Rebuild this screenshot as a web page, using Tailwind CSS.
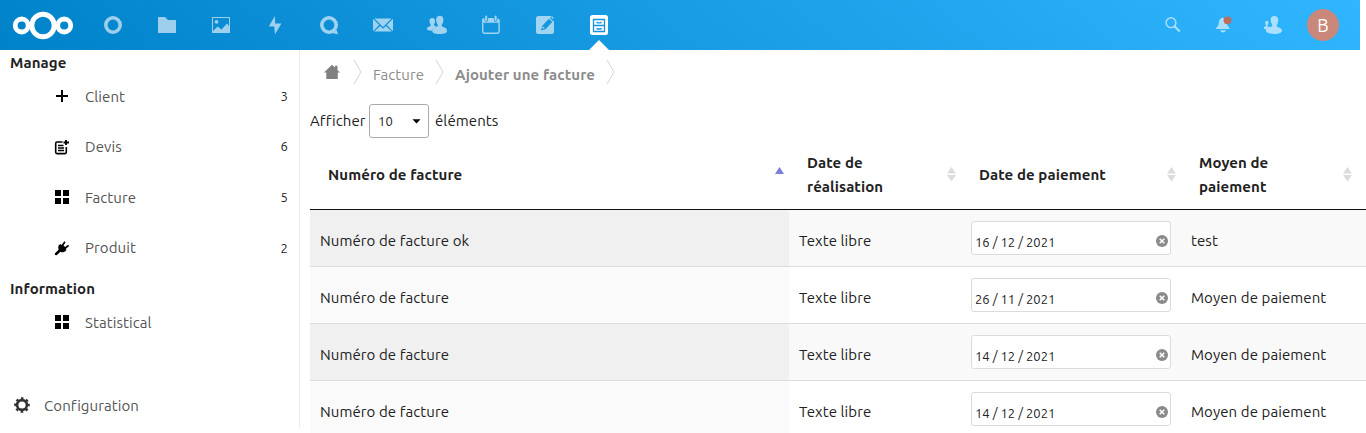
<!DOCTYPE html>
<html lang="fr">
<head>
<meta charset="utf-8">
<title>Facture</title>
<script src="https://cdn.jsdelivr.net/npm/@tailwindcss/browser@4"></script>
</head>
<body class="h-[433px] w-[1366px] overflow-hidden bg-white font-['Ubuntu','Noto_Sans',sans-serif] text-[15px] tracking-[0.085px] text-[#222]">
<header class="flex h-[50px] w-[1360px] items-center bg-[linear-gradient(40deg,#0082c9_0%,#30b6ff_100%)]">
  <svg class="h-[50px] w-[86px] shrink-0" viewBox="0 0 86 50" fill="none" stroke="#fff"><circle cx="21.7" cy="25.5" r="6.5" stroke-width="4.8"/><circle cx="43" cy="25.5" r="11.2" stroke-width="5"/><circle cx="64.2" cy="25.5" r="6.5" stroke-width="4.8"/></svg>
  <nav class="flex h-[50px] text-white">
    <svg class="h-[50px] w-[54px] opacity-60" viewBox="0 0 54 50" fill="none" stroke="currentColor"><circle cx="27" cy="25" r="7.2" stroke-width="3.6"/></svg>
    <svg class="h-[50px] w-[54px] opacity-60" viewBox="0 0 54 50" fill="currentColor"><path d="M18 17.5q0-.5.5-.5H25l3 3h7.500q.5 0 .5.500V32.500q0 .5-.5.500H18.500q-.5 0-.5-.5z"/></svg>
    <svg class="h-[50px] w-[54px] opacity-60" viewBox="0 0 54 50" fill="currentColor"><path fill-rule="evenodd" d="M18.500 17h17q.5 0 .5.500v15q0 .5-.5.500h-17q-.5 0-.5-.5v-15q0-.5.500-.5zM19 18v13l4.500-4.500 4 3 5.500-6 2 2.500V18z"/><circle cx="22.500" cy="21.800" r="1.900"/></svg>
    <svg class="h-[50px] w-[54px] opacity-60" viewBox="0 0 54 50" fill="currentColor"><path d="M26.800 16 20.800 26.500h5.400L27 34.200l6.400-10.700h-6.200z"/></svg>
    <svg class="h-[50px] w-[54px] opacity-60" viewBox="0 0 54 50" fill="none" stroke="currentColor"><circle cx="27" cy="25" r="7.200" stroke-width="3.600"/><path d="M30 33l5.800 1.200q.3-.2 0-.8L34.700 30z" fill="currentColor" stroke="none"/></svg>
    <svg class="h-[50px] w-[54px] opacity-60" viewBox="0 0 54 50" fill="currentColor"><path d="M18.500 18.500h17L27 27zM17 18.700v12.500l6.200-6.200zM37 18.700v12.500l-6.200-6.200zM24.200 25.900 18.200 31.500h17.700l-6-5.600-2.900 2.800z"/></svg>
    <svg class="h-[50px] w-[54px] opacity-60" viewBox="0 0 54 50" fill="currentColor"><path d="M22.300 18c-1.900 0-2.900 1.300-2.800 3 0 1.500.4 2.500 1.200 3.500.3 1-.2 1.500-1.200 1.900-1.400.5-2.300.8-2.500 2.100 0 1.600 1 2.200 4.800 2.300.4-2 2-2.800 4.500-3.800-.6-.7-.9-1-2-1.400-.5-.3-.6-.7-.3-1.200.8-1 1-1.900 1-3.400 0-1.700-.9-3-2.700-3z"/><path d="M30 15.700c-2.600 0-3.900 1.700-3.900 4 0 2 .5 3.400 1.600 4.800.4 1.400-.2 2-1.600 2.600-2 .8-3.900 1.200-3.900 3.600 0 2 2 3.300 7.300 3.300 5.200 0 7.500-1.200 7.500-3.300 0-2.200-1.600-2.800-3.800-3.600-1.500-.6-1.900-1.300-1.300-2.600 1-1.500 1.500-2.700 1.500-4.800 0-2.500-1.200-4-3.400-4z"/></svg>
    <svg class="h-[50px] w-[54px] opacity-60" viewBox="0 0 54 50" fill="none" stroke="currentColor"><path d="M18.700 22.800V31q0 2.200 2.200 2.200h12q2.200 0 2.200-2.200v-8.200" stroke-width="1.400"/><path d="M18 22.700V20.500q0-2.500 2.500-2.500v1.500q0 2.200 1.800 2.200t1.800-2.200V18H29.800v1.500q0 2.200 1.800 2.200t1.800-2.200V18.200q2.400.3 2.400 2.500v2z" fill="currentColor" stroke="none"/><path d="M22.200 16.500v3.500M31.600 16.500v3.500" stroke-width="2" stroke-linecap="round"/></svg>
    <svg class="h-[50px] w-[54px] opacity-60" viewBox="0 0 54 50" fill="currentColor"><path fill-rule="evenodd" d="M20.500 16h13l-1.500 2 3.500 3.500.5-.5V31.500q0 2.500-2.500 2.500h-13q-2.500 0-2.500-2.500v-13q0-2.500 2.500-2.500zM31 18.700 24.300 25.800 23 30.500 27.500 29.200 34.300 22z"/><path d="M34 16.200l1.900 1.700-.9 1.100-1.900-1.800zM24.900 26.300l1.900 1.800-1.700.6-.7-.7z"/></svg>
    <span class="relative h-[50px] w-[54px]">
      <svg class="h-[50px] w-[54px]" viewBox="0 0 54 50" fill="none"><rect x="18" y="15" width="18" height="20" rx="2.500" fill="#fff"/><path d="M21.500 19.500h11v12h-11zM21.500 25.500h11" stroke="#1592e2" stroke-width="1.300"/><path d="M24.700 21.900q.3 1 1.100 1h2.500q.8 0 1-1M24.700 28q.3 1 1.100 1h2.500q.8 0 1-1" stroke="#1592e2" stroke-width="1.400"/></svg>
      <svg class="absolute bottom-0 left-[17px] h-[10px] w-[20px]" viewBox="0 0 20 10" fill="#fff"><path d="M10 0 20 10H0z"/></svg>
    </span>
  </nav>
  <div class="ml-auto flex h-[50px] items-center text-white/60">
    <svg class="h-[50px] w-[50px]" viewBox="0 0 50 50" fill="none" stroke="currentColor"><circle cx="23" cy="22.700" r="4.900" stroke-width="1.500"/><path d="M26.500 26.200 31.800 31.500" stroke-width="2.200"/></svg>
    <svg class="h-[50px] w-[50px]" viewBox="0 0 50 50" fill="currentColor"><path d="M25 17.500c-3 .5-4.100 3-4.200 5.500-.1 2.500-1.200 3.300-2.300 4.500-.6.600-.5 1.500-.2 1.500h13c.4 0 .3-.8-.2-1.500-1.200-1.300-2-2.300-2.200-4.500zM22 30.200h6q-1 2.300-3 2.300t-3-2.300z"/><circle cx="29.500" cy="20.300" r="3.900" fill="#bd6d5e"/></svg>
    <svg class="h-[50px] w-[50px]" viewBox="0 0 50 50" fill="currentColor"><path d="M26.300 16c-2.600 0-3.700 1.700-3.600 4 .1 2.300.7 3.300 1.400 4.500.3 1.200-.2 1.900-1.300 2.300-1.300.3-2 .2-2.700-.1-.9-.4-.9-.9-.4-1.700.6-.8.800-1.500.8-2.300 0-1.100-.6-1.900-1.600-1.900s-1.700.8-1.700 1.900c0 .9.300 1.600.7 2.200.4.700.1 1.200-.7 1.500-1 .4-1.500.9-1.400 1.800.1.700 1 1 2.300 1.100-.4 1-.2 2.200.8 3 1.600 1.300 4.400 1.600 7.400 1.600 4.500 0 7.700-1.200 7.700-3.200 0-2.100-1.900-2.800-3.700-3.400-1.600-.5-1.900-1.300-1.200-2.700.7-1.300 1.100-2.700 1.100-4.600 0-2.700-1.500-4-3.900-4z"/></svg>
    <div class="mr-[21px] ml-[9px] flex size-8 items-center justify-center rounded-full bg-[#c98879] text-[18px] text-white">B</div>
  </div>
</header>
<div class="flex h-[383px] w-[1366px] overflow-hidden">
  <aside class="flex h-[378px] w-[300px] shrink-0 flex-col border-r border-[#ededed] text-[#555]">
    <h2 class="h-[22px] pl-[10px] leading-[26px] font-bold text-[#222]">Manage</h2>
    <ul>
      <li class="flex h-[50px] items-center pr-[11px] pl-[54px]"><svg class="mr-[15px] size-4" viewBox="0 0 16 16" stroke="#000" stroke-width="2"><path d="M8 1v12M2 7h12"/></svg><span class="grow">Client</span><span class="text-[13px] text-[#222]">3</span></li>
      <li class="flex h-[50px] items-center pr-[11px] pl-[54px]"><svg class="mr-[15px] size-4" viewBox="0 0 16 16" fill="none" stroke="#000"><path d="M8.500 3H3q-1.300 0-1.300 1.300v9q0 1.300 1.300 1.300h8q1.300 0 1.300-1.300V8" stroke-width="1.600"/><path d="M4 6.500h5.500M4 9h6M4 11.500h6" stroke-width="1.500"/><path d="M12 1v5M9.500 3.500h5.500" stroke-width="1.800"/></svg><span class="grow">Devis</span><span class="text-[13px] text-[#222]">6</span></li>
      <li class="flex h-[52px] items-center pr-[11px] pl-[54px]"><svg class="mr-[15px] size-4 -translate-y-px" viewBox="0 0 16 16"><path d="M1 1h6v6H1zM9 1h6v6H9zM1 9h6v6H1zM9 9h6v6H9z"/></svg><span class="grow">Facture</span><span class="text-[13px] text-[#222]">5</span></li>
      <li class="flex h-[49px] items-center pr-[11px] pl-[54px]"><svg class="mr-[15px] size-4 -translate-y-px" viewBox="0 0 16 16"><path d="M4.700 5.200 6.400 4 7.600 5l2.700-3.700 1.300 1L9.500 5.600l1.600 1.500 3-2.300 1 1.200-3.300 3 .7 1-1.500 1.500q-2 1.500-4.600.2L2.700 15.300 1 14.900l-.2-1.500 3.800-3.700q-1-2.400.1-4.500z"/></svg><span class="grow">Produit</span><span class="text-[13px] text-[#222]">2</span></li>
    </ul>
    <h2 class="h-[25px] pl-[10px] leading-[32px] font-bold text-[#222]">Information</h2>
    <ul>
      <li class="flex h-[50px] items-center pr-[11px] pl-[54px]"><svg class="mr-[15px] size-4 -translate-y-px" viewBox="0 0 16 16"><path d="M1 1h6v6H1zM9 1h6v6H9zM1 9h6v6H1zM9 9h6v6H9z"/></svg><span>Statistical</span></li>
    </ul>
    <div class="mt-auto flex h-[44px] items-center pl-[14px]"><svg class="mr-[14px] size-4 -translate-y-px" viewBox="0 0 16 16" fill="none" stroke="#333"><circle cx="8" cy="8" r="4.900" stroke-width="2.600"/><circle cx="8" cy="8" r="6.700" stroke-width="2.200" stroke-dasharray="2.630 2.630" stroke-dashoffset="1.315"/></svg><span>Configuration</span></div>
  </aside>
  <main class="w-[1066px] shrink-0 pl-[10px]">
    <nav class="flex h-[50px] w-[400px] items-center text-[#8c8c8c]">
      <svg class="ml-[14px] size-4 -translate-y-[3px]" viewBox="0 0 16 16" fill="#808080"><path d="M8 .8 16 8.500h-2.200V15H2.300V8.500H0L8 .8l3 2.700V1.700h2.500v4.500z"/></svg>
      <svg class="ml-[13px] h-[26px] w-[9px] -translate-y-[3px]" viewBox="0 0 9 26" fill="none" stroke="#d5d5d5"><path d="M1 1 8 13 1 25"/></svg>
      <span class="ml-[11px] w-[51px] whitespace-nowrap">Facture</span>
      <svg class="ml-[11px] h-[26px] w-[9px] -translate-y-[3px]" viewBox="0 0 9 26" fill="none" stroke="#d5d5d5"><path d="M1 1 8 13 1 25"/></svg>
      <span class="ml-[11px] w-[141px] font-bold whitespace-nowrap">Ajouter une facture</span>
      <svg class="ml-[10px] h-[26px] w-[9px] -translate-y-[3px]" viewBox="0 0 9 26" fill="none" stroke="#d5d5d5"><path d="M1 1 8 13 1 25"/></svg>
    </nav>
    <div class="flex h-[42px] items-center">
      <span class="w-[59px] whitespace-nowrap">Afficher</span>
      <div class="mr-[6px] flex h-[34px] w-[60px] items-center justify-between rounded-[3px] border border-[#aaa] pr-[7px] pl-[8px] text-[13px]"><span class="pt-px">10</span><svg class="h-[5px] w-[9px]" viewBox="0 0 9 5"><path d="M.5.300h8L4.500 4.500z"/></svg></div>
      <span>éléments</span>
    </div>
    <div class="grid grid-cols-[479px_172px_220px_185px] font-bold">
      <div class="flex h-[68px] items-center justify-between border-b border-[#111] pr-[5px] pl-[18px]"><span>Numéro de facture</span><svg class="h-[16px] w-[9px] -translate-y-[2px]" viewBox="0 0 9 16"><path d="M4.500 1 9 8H0z" fill="#7a7fdc"/></svg></div>
      <div class="flex h-[68px] items-center justify-between border-b border-[#111] pr-[5px] pl-[18px] leading-6"><span class="-translate-y-px">Date de<br>réalisation</span><svg class="h-[16px] w-[9px] -translate-y-[2px]" viewBox="0 0 9 16" fill="#dcdcdc"><path d="M4.500 1 9 7.500H0zM0 9h9l-4.500 6.500z"/></svg></div>
      <div class="flex h-[68px] items-center justify-between border-b border-[#111] pr-[5px] pl-[18px]"><span>Date de paiement</span><svg class="h-[16px] w-[9px] -translate-y-[2px]" viewBox="0 0 9 16" fill="#dcdcdc"><path d="M4.500 1 9 7.500H0zM0 9h9l-4.500 6.500z"/></svg></div>
      <div class="flex h-[68px] items-center justify-between border-b border-[#111] pr-[14px] pl-[18px] leading-6"><span class="-translate-y-px">Moyen de<br>paiement</span><svg class="h-[16px] w-[9px] -translate-y-[2px]" viewBox="0 0 9 16" fill="#dcdcdc"><path d="M4.500 1 9 7.500H0zM0 9h9l-4.500 6.500z"/></svg></div>
    </div>
    <div id="rows"></div>
  </main>
</div>
<script>
const rows = [
  ['Numéro de facture ok', '16 / 12 / 2021', 'test'],
  ['Numéro de facture', '26 / 11 / 2021', 'Moyen de paiement'],
  ['Numéro de facture', '14 / 12 / 2021', 'Moyen de paiement'],
  ['Numéro de facture', '14 / 12 / 2021', 'Moyen de paiement'],
];
document.getElementById('rows').innerHTML = rows.map(([name, date, pay]) => `
  <div class="group grid h-[57px] grid-cols-[479px_172px_220px_185px] border-b border-[#ddd] odd:bg-[#f9f9f9]">
    <div class="flex items-center bg-[#fafafa] pt-[6px] pl-[10px] group-odd:bg-[#f0f0f0]">${name}</div>
    <div class="flex items-center pt-[6px] pl-[10px]">Texte libre</div>
    <div class="flex items-center pl-[10px]">
      <div class="flex h-[34px] w-[200px] items-center justify-between rounded-[3px] border border-[#dbdbdb] bg-white pr-[2px] pl-[3px]"><span class="pt-[10px] text-[13px] tracking-[0.020px] whitespace-nowrap">${date}</span><svg class="mt-[6px] size-3" viewBox="0 0 12 12"><circle cx="6" cy="6" r="6" fill="#8a8a8a"/><path d="M3.700 3.700l4.600 4.600M8.300 3.700 3.700 8.300" stroke="#fff" stroke-width="1.500"/></svg></div>
    </div>
    <div class="flex items-center pt-[6px] pl-[10px]">${pay}</div>
  </div>`).join('');
</script>
</body>
</html>
